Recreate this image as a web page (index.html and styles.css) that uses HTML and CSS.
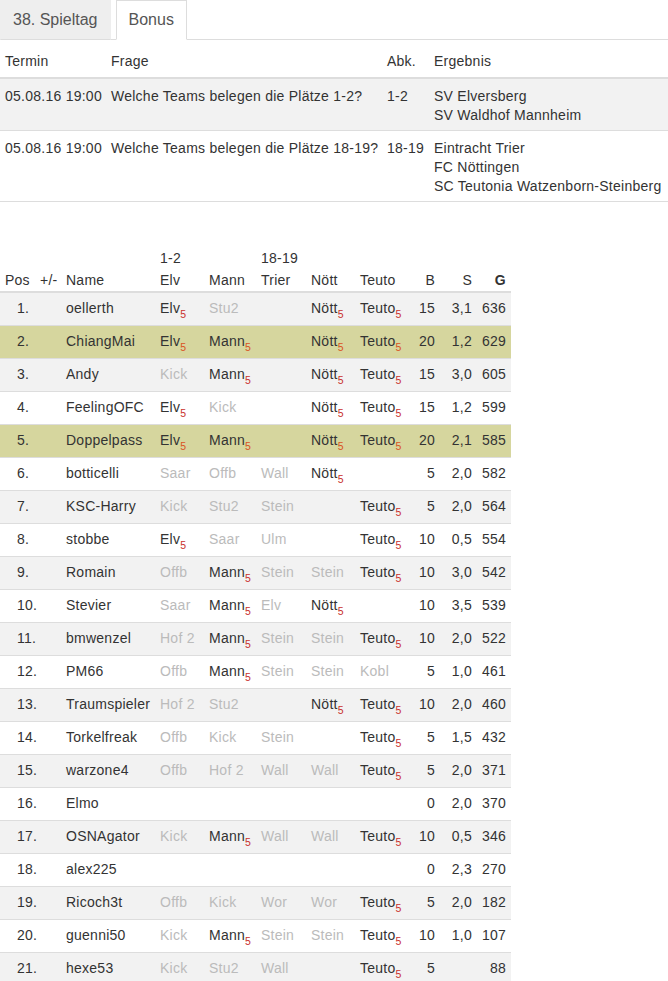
FILE: index.html
```html
<!DOCTYPE html>
<html lang="de">
<head>
<meta charset="utf-8">
<title>Bonus</title>
<link rel="stylesheet" href="styles.css">
</head>
<body>
<ul class="tabs">
  <li class="tab"><a>38. Spieltag</a></li>
  <li class="tab active"><a>Bonus</a></li>
</ul>

<table class="bonus">
  <colgroup><col class="c-termin"><col class="c-frage"><col class="c-abk"><col class="c-erg"></colgroup>
  <thead>
    <tr><th>Termin</th><th>Frage</th><th>Abk.</th><th>Ergebnis</th></tr>
  </thead>
  <tbody>
    <tr class="odd"><td>05.08.16 19:00</td><td>Welche Teams belegen die Plätze 1-2?</td><td>1-2</td><td>SV Elversberg<br>SV Waldhof Mannheim</td></tr>
    <tr><td>05.08.16 19:00</td><td>Welche Teams belegen die Plätze 18-19?</td><td>18-19</td><td>Eintracht Trier<br>FC Nöttingen<br>SC Teutonia Watzenborn-Steinberg</td></tr>
  </tbody>
</table>

<table class="ranking">
  <colgroup>
    <col class="w-pos"><col class="w-pm"><col class="w-name"><col class="w-elv"><col class="w-mann"><col class="w-trier"><col class="w-nott"><col class="w-teuto"><col class="w-b"><col class="w-s"><col class="w-g">
  </colgroup>
  <thead>
    <tr>
      <th>Pos</th><th>+/-</th><th>Name</th><th>1-2<br>Elv</th><th>Mann</th><th>18-19<br>Trier</th><th>Nött</th><th>Teuto</th><th class="num">B</th><th class="num">S</th><th class="num bold">G</th>
    </tr>
  </thead>
  <tbody>
    <tr class="odd"><td class="pos">1.</td><td></td><td>oellerth</td><td>Elv<sub>5</sub></td><td class="miss">Stu2</td><td></td><td>Nött<sub>5</sub></td><td>Teuto<sub>5</sub></td><td class="num">15</td><td class="num">3,1</td><td class="num">636</td></tr>
    <tr class="hl"><td class="pos">2.</td><td></td><td>ChiangMai</td><td>Elv<sub>5</sub></td><td>Mann<sub>5</sub></td><td></td><td>Nött<sub>5</sub></td><td>Teuto<sub>5</sub></td><td class="num">20</td><td class="num">1,2</td><td class="num">629</td></tr>
    <tr class="odd"><td class="pos">3.</td><td></td><td>Andy</td><td class="miss">Kick</td><td>Mann<sub>5</sub></td><td></td><td>Nött<sub>5</sub></td><td>Teuto<sub>5</sub></td><td class="num">15</td><td class="num">3,0</td><td class="num">605</td></tr>
    <tr><td class="pos">4.</td><td></td><td>FeelingOFC</td><td>Elv<sub>5</sub></td><td class="miss">Kick</td><td></td><td>Nött<sub>5</sub></td><td>Teuto<sub>5</sub></td><td class="num">15</td><td class="num">1,2</td><td class="num">599</td></tr>
    <tr class="hl"><td class="pos">5.</td><td></td><td>Doppelpass</td><td>Elv<sub>5</sub></td><td>Mann<sub>5</sub></td><td></td><td>Nött<sub>5</sub></td><td>Teuto<sub>5</sub></td><td class="num">20</td><td class="num">2,1</td><td class="num">585</td></tr>
    <tr><td class="pos">6.</td><td></td><td>botticelli</td><td class="miss">Saar</td><td class="miss">Offb</td><td class="miss">Wall</td><td>Nött<sub>5</sub></td><td></td><td class="num">5</td><td class="num">2,0</td><td class="num">582</td></tr>
    <tr class="odd"><td class="pos">7.</td><td></td><td>KSC-Harry</td><td class="miss">Kick</td><td class="miss">Stu2</td><td class="miss">Stein</td><td></td><td>Teuto<sub>5</sub></td><td class="num">5</td><td class="num">2,0</td><td class="num">564</td></tr>
    <tr><td class="pos">8.</td><td></td><td>stobbe</td><td>Elv<sub>5</sub></td><td class="miss">Saar</td><td class="miss">Ulm</td><td></td><td>Teuto<sub>5</sub></td><td class="num">10</td><td class="num">0,5</td><td class="num">554</td></tr>
    <tr class="odd"><td class="pos">9.</td><td></td><td>Romain</td><td class="miss">Offb</td><td>Mann<sub>5</sub></td><td class="miss">Stein</td><td class="miss">Stein</td><td>Teuto<sub>5</sub></td><td class="num">10</td><td class="num">3,0</td><td class="num">542</td></tr>
    <tr><td class="pos">10.</td><td></td><td>Stevier</td><td class="miss">Saar</td><td>Mann<sub>5</sub></td><td class="miss">Elv</td><td>Nött<sub>5</sub></td><td></td><td class="num">10</td><td class="num">3,5</td><td class="num">539</td></tr>
    <tr class="odd"><td class="pos">11.</td><td></td><td>bmwenzel</td><td class="miss">Hof 2</td><td>Mann<sub>5</sub></td><td class="miss">Stein</td><td class="miss">Stein</td><td>Teuto<sub>5</sub></td><td class="num">10</td><td class="num">2,0</td><td class="num">522</td></tr>
    <tr><td class="pos">12.</td><td></td><td>PM66</td><td class="miss">Offb</td><td>Mann<sub>5</sub></td><td class="miss">Stein</td><td class="miss">Stein</td><td class="miss">Kobl</td><td class="num">5</td><td class="num">1,0</td><td class="num">461</td></tr>
    <tr class="odd"><td class="pos">13.</td><td></td><td>Traumspieler</td><td class="miss">Hof 2</td><td class="miss">Stu2</td><td></td><td>Nött<sub>5</sub></td><td>Teuto<sub>5</sub></td><td class="num">10</td><td class="num">2,0</td><td class="num">460</td></tr>
    <tr><td class="pos">14.</td><td></td><td>Torkelfreak</td><td class="miss">Offb</td><td class="miss">Kick</td><td class="miss">Stein</td><td></td><td>Teuto<sub>5</sub></td><td class="num">5</td><td class="num">1,5</td><td class="num">432</td></tr>
    <tr class="odd"><td class="pos">15.</td><td></td><td>warzone4</td><td class="miss">Offb</td><td class="miss">Hof 2</td><td class="miss">Wall</td><td class="miss">Wall</td><td>Teuto<sub>5</sub></td><td class="num">5</td><td class="num">2,0</td><td class="num">371</td></tr>
    <tr><td class="pos">16.</td><td></td><td>Elmo</td><td></td><td></td><td></td><td></td><td></td><td class="num">0</td><td class="num">2,0</td><td class="num">370</td></tr>
    <tr class="odd"><td class="pos">17.</td><td></td><td>OSNAgator</td><td class="miss">Kick</td><td>Mann<sub>5</sub></td><td class="miss">Wall</td><td class="miss">Wall</td><td>Teuto<sub>5</sub></td><td class="num">10</td><td class="num">0,5</td><td class="num">346</td></tr>
    <tr><td class="pos">18.</td><td></td><td>alex225</td><td></td><td></td><td></td><td></td><td></td><td class="num">0</td><td class="num">2,3</td><td class="num">270</td></tr>
    <tr class="odd"><td class="pos">19.</td><td></td><td>Ricoch3t</td><td class="miss">Offb</td><td class="miss">Kick</td><td class="miss">Wor</td><td class="miss">Wor</td><td>Teuto<sub>5</sub></td><td class="num">5</td><td class="num">2,0</td><td class="num">182</td></tr>
    <tr><td class="pos">20.</td><td></td><td>guenni50</td><td class="miss">Kick</td><td>Mann<sub>5</sub></td><td class="miss">Stein</td><td class="miss">Stein</td><td>Teuto<sub>5</sub></td><td class="num">10</td><td class="num">1,0</td><td class="num">107</td></tr>
    <tr class="odd"><td class="pos">21.</td><td></td><td>hexe53</td><td class="miss">Kick</td><td class="miss">Stu2</td><td class="miss">Wall</td><td></td><td>Teuto<sub>5</sub></td><td class="num">5</td><td class="num"></td><td class="num">88</td></tr>
  </tbody>
</table>
</body>
</html>
```
FILE: styles.css
```css
* { box-sizing: border-box; }

body {
  margin: 0;
  font-family: "Liberation Sans", Arial, sans-serif;
  font-size: 14px;
  line-height: 20px;
  letter-spacing: 0.25px;
  color: #333;
  background: #fff;
}

/* Tabs */
.tabs {
  list-style: none;
  margin: 0;
  padding: 0;
  display: flex;
  gap: 5px;
  border-bottom: 1px solid #ddd;
}
.tab {
  margin-bottom: -1px;
}
.tab a {
  display: block;
  padding: 9px 12px;
  font-size: 16px;
  line-height: 20px;
  letter-spacing: 0;
  border: 1px solid #eee;
  border-bottom-color: #ddd;
  background: #eee;
  color: #555;
}
.tab.active a {
  background: #fff;
  border-color: #ddd;
  border-bottom-color: #fff;
}

/* Bonus table */
.bonus {
  width: 100%;
  margin-top: 5px;
  border-collapse: collapse;
  table-layout: fixed;
}
.c-termin { width: 106px; }
.c-frage { width: 276px; }
.c-abk { width: 47px; }
.bonus th {
  font-weight: normal;
  text-align: left;
  padding: 7px 5px 6px;
  line-height: 19px;
  border-bottom: 2px solid #ddd;
  white-space: nowrap;
}
.bonus td {
  padding: 8px 5px 5px;
  line-height: 19px;
  vertical-align: top;
  border-top: 1px solid #ddd;
  border-bottom: 1px solid #ddd;
  white-space: nowrap;
}
.bonus tr.odd td { background: #f2f2f2; }

/* Ranking table */
.ranking {
  width: 511px;
  margin-top: 45px;
  border-collapse: collapse;
  table-layout: fixed;
}
.w-pos { width: 35px; }
.w-pm { width: 26px; }
.w-name { width: 94px; }
.w-elv { width: 49px; }
.w-mann { width: 52px; }
.w-trier { width: 50px; }
.w-nott { width: 49px; }
.w-teuto { width: 52px; }
.w-b { width: 33px; }
.w-s { width: 37px; }
.w-g { width: 34px; }

.ranking th {
  font-weight: normal;
  text-align: left;
  vertical-align: bottom;
  padding: 0 5px;
  line-height: 22px;
  border-bottom: 2px solid #ddd;
  white-space: nowrap;
}
.ranking th.bold { font-weight: bold; }
.ranking td {
  padding: 4px 5px 6px;
  line-height: 22px;
  border-top: 1px solid #ddd;
  white-space: nowrap;
  vertical-align: top;
}
.ranking .num { text-align: right; }
.ranking td.pos { padding-left: 17px; }
.ranking tr.odd td { background: #f2f2f2; }
.ranking tr.hl td { background: #d6d69e; }
.ranking td.miss { color: #bbb; }

sub {
  position: relative;
  font-size: 75%;
  line-height: 0;
  vertical-align: baseline;
  top: 0.5em;
  letter-spacing: 0;
  color: #c9302c;
}
.ranking tr.hl sub { color: #d9531e; }
```
